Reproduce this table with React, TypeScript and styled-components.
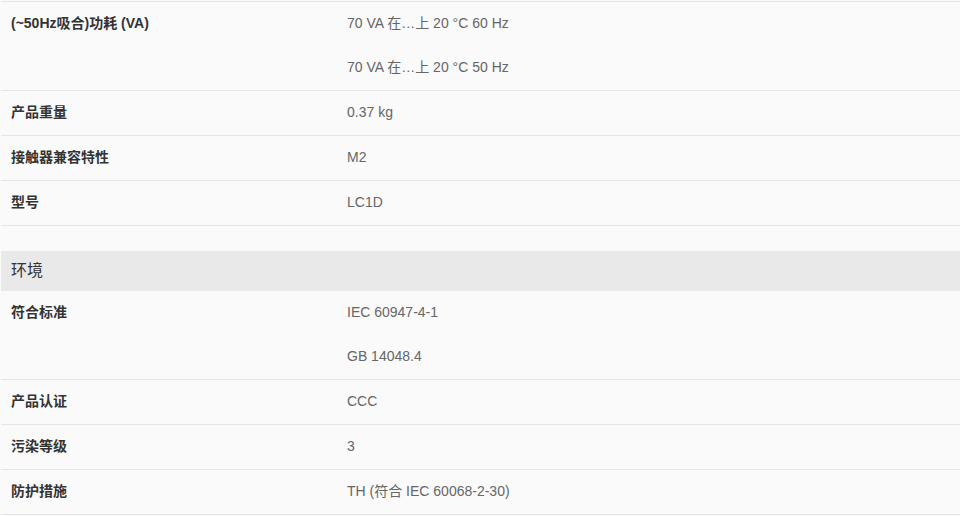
import React from 'react';
import styled, { createGlobalStyle } from 'styled-components';

const GlobalStyle = createGlobalStyle`
  html, body {
    margin: 0;
    padding: 0;
    background: #fafafa;
  }
  body {
    font-family: "Liberation Sans", Arial, "Noto Sans CJK SC", sans-serif;
  }
`;

const Page = styled.div`
  padding: 1px 0 0 1px;
  background: #fafafa;
`;

const Group = styled.section<{ $gap?: boolean }>`
  margin-top: ${p => (p.$gap ? '25px' : '0')};
`;

const GroupTitle = styled.h3`
  margin: 0;
  height: 40px;
  line-height: 40px;
  padding-left: 10px;
  background: #e9e9e9;
  color: #333;
  font-size: 16px;
  font-weight: 400;
`;

const Row = styled.div<{ $topLine?: boolean }>`
  display: grid;
  grid-template-columns: 346px 1fr;
  border-bottom: 1px solid #e4e4e4;
  border-top: ${p => (p.$topLine ? '1px solid #e4e4e4' : 'none')};
`;

const Label = styled.div`
  padding: 0 10px 2px;
  height: 42px;
  line-height: 42px;
  font-size: 14px;
  font-weight: 700;
  color: #333;
`;

const Values = styled.div`
  display: flex;
  flex-direction: column;
`;

const Value = styled.div`
  padding-bottom: 2px;
  height: 42px;
  line-height: 42px;
  font-size: 14px;
  color: #666;
`;

type Spec = { label: string; values: string[] };

const general: Spec[] = [
  { label: '(~50Hz吸合)功耗 (VA)', values: ['70 VA 在…上 20 °C 60 Hz', '70 VA 在…上 20 °C 50 Hz'] },
  { label: '产品重量', values: ['0.37 kg'] },
  { label: '接触器兼容特性', values: ['M2'] },
  { label: '型号', values: ['LC1D'] },
];

const environment: Spec[] = [
  { label: '符合标准', values: ['IEC 60947-4-1', 'GB 14048.4'] },
  { label: '产品认证', values: ['CCC'] },
  { label: '污染等级', values: ['3'] },
  { label: '防护措施', values: ['TH (符合 IEC 60068-2-30)'] },
];

const SpecRow: React.FC<{ spec: Spec; first?: boolean }> = ({ spec, first }) => (
  <Row $topLine={first}>
    <Label>{spec.label}</Label>
    <Values>
      {spec.values.map(v => (
        <Value key={v}>{v}</Value>
      ))}
    </Values>
  </Row>
);

const App: React.FC = () => (
  <Page>
    <GlobalStyle />
    <Group>
      {general.map((s, i) => (
        <SpecRow key={s.label} spec={s} first={i === 0} />
      ))}
    </Group>
    <Group $gap>
      <GroupTitle>环境</GroupTitle>
      {environment.map(s => (
        <SpecRow key={s.label} spec={s} />
      ))}
    </Group>
  </Page>
);

export default App;
